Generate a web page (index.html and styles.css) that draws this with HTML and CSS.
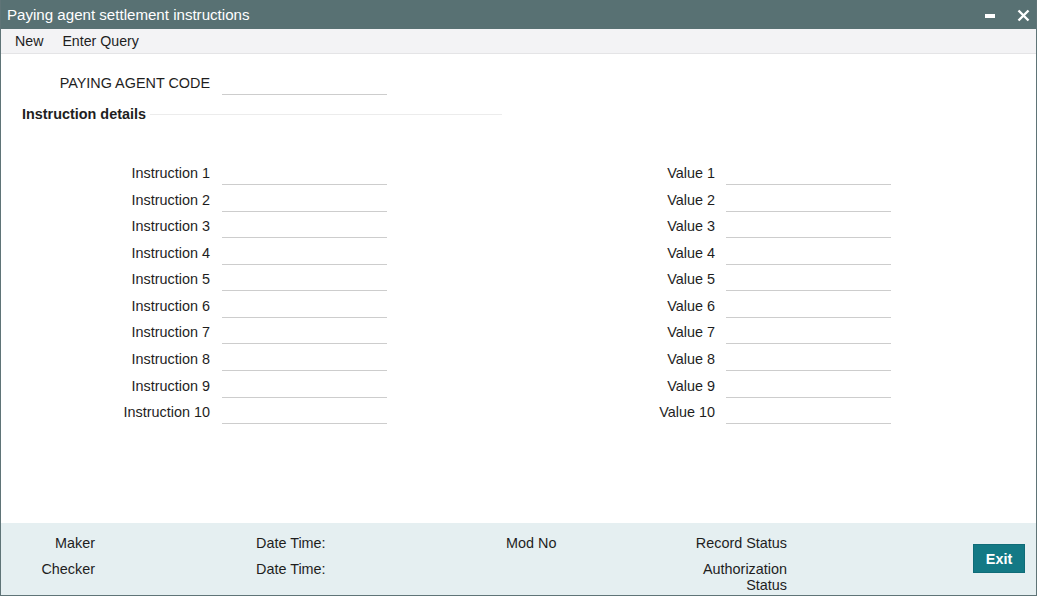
FILE: index.html
```
<!DOCTYPE html>
<html>
<head>
<meta charset="utf-8">
<link rel="stylesheet" href="styles.css">
</head>
<body>
<div class="window">
  <div class="titlebar">
    <span class="title">Paying agent settlement instructions</span>
    <span class="controls">
      <svg class="ico-min" width="11" height="12" viewBox="0 0 11 12"><rect x="0" y="5" width="10" height="4" fill="#fff"/></svg>
      <svg class="ico-close" width="13" height="13" viewBox="0 0 13 13"><path d="M1.5 1.5 L11.5 11.5 M11.5 1.5 L1.5 11.5" stroke="#fff" stroke-width="2.4" fill="none"/></svg>
    </span>
  </div>
  <div class="toolbar">
    <span class="tool">New</span>
    <span class="tool">Enter Query</span>
  </div>
  <div class="content">
    <div class="form-grid top-row">
      <label class="lbl">PAYING AGENT CODE</label>
      <div class="field"></div>
    </div>
    <div class="section-head">
      <span class="section-title">Instruction details</span>
      <span class="section-line"></span>
    </div>
    <div class="columns">
      <div class="form-grid left-col">
        <label class="lbl">Instruction 1</label><div class="field"></div>
        <label class="lbl">Instruction 2</label><div class="field"></div>
        <label class="lbl">Instruction 3</label><div class="field"></div>
        <label class="lbl">Instruction 4</label><div class="field"></div>
        <label class="lbl">Instruction 5</label><div class="field"></div>
        <label class="lbl">Instruction 6</label><div class="field"></div>
        <label class="lbl">Instruction 7</label><div class="field"></div>
        <label class="lbl">Instruction 8</label><div class="field"></div>
        <label class="lbl">Instruction 9</label><div class="field"></div>
        <label class="lbl">Instruction 10</label><div class="field"></div>
      </div>
      <div class="form-grid right-col">
        <label class="lbl">Value 1</label><div class="field"></div>
        <label class="lbl">Value 2</label><div class="field"></div>
        <label class="lbl">Value 3</label><div class="field"></div>
        <label class="lbl">Value 4</label><div class="field"></div>
        <label class="lbl">Value 5</label><div class="field"></div>
        <label class="lbl">Value 6</label><div class="field"></div>
        <label class="lbl">Value 7</label><div class="field"></div>
        <label class="lbl">Value 8</label><div class="field"></div>
        <label class="lbl">Value 9</label><div class="field"></div>
        <label class="lbl">Value 10</label><div class="field"></div>
      </div>
    </div>
  </div>
  <div class="footer">
    <span class="f-maker">Maker</span>
    <span class="f-date1">Date Time:</span>
    <span class="f-mod">Mod No</span>
    <span class="f-rec">Record Status</span>
    <span class="f-checker">Checker</span>
    <span class="f-date2">Date Time:</span>
    <span class="f-auth">Authorization<br>Status</span>
    <button class="exit-btn">Exit</button>
  </div>
</div>
</body>
</html>
```
FILE: styles.css
```
html, body {
  margin: 0;
  padding: 0;
  background: #ffffff;
}
body {
  font-family: "Liberation Sans", Arial, sans-serif;
  font-size: 14.4px;
  color: #1e1e1e;
}
.window {
  width: 1037px;
  height: 596px;
  box-sizing: border-box;
  border-left: 1px solid #5f7477;
  border-right: 1px solid #5f7477;
  border-bottom: 1px solid #5f7477;
  display: flex;
  flex-direction: column;
  overflow: hidden;
}
.titlebar {
  height: 29px;
  flex: none;
  background: #587173;
  color: #ffffff;
  display: flex;
  align-items: center;
  justify-content: space-between;
  padding: 0 0 0 7px;
  margin-left: -1px;
  margin-right: -1px;
}
.title {
  font-size: 15.1px;
}
.controls {
  display: flex;
  align-items: center;
  gap: 21px;
  padding-right: 7px;
}
.ico-min { display: block; margin-top: 1px; }
.ico-close { display: block; margin-top: 1px; }
.toolbar {
  height: 25px;
  flex: none;
  box-sizing: border-box;
  background: #f3f3f5;
  border-bottom: 1px solid #e4e4e6;
  display: flex;
  align-items: center;
  padding-left: 14px;
  gap: 19px;
  padding-bottom: 1px;
  font-size: 14.2px;
}
.content {
  flex: 1;
  padding-top: 18px;
}
.form-grid {
  display: grid;
  grid-auto-rows: 22px;
  row-gap: 4.58px;
  align-items: center;
}
.lbl {
  text-align: right;
  white-space: nowrap;
  line-height: 16px;
}
.field {
  height: 23px;
  box-sizing: border-box;
  border-bottom: 1px solid #cdcdcd;
  align-self: start;
}
.top-row {
  grid-template-columns: 209px 165px;
  column-gap: 12px;
}
.section-head {
  display: flex;
  align-items: center;
  width: 480px;
  margin-left: 21px;
  margin-top: 9px;
  height: 22px;
}
.section-title {
  font-weight: bold;
  white-space: nowrap;
  margin-right: 4px;
}
.section-line {
  flex: 1;
  height: 1px;
  background: #ececec;
}
.columns {
  display: flex;
  margin-top: 37px;
}
.left-col {
  grid-template-columns: 209px 165px;
  column-gap: 12px;
}
.right-col {
  grid-template-columns: 328px 165px;
  column-gap: 11px;
}
.footer {
  height: 72px;
  flex: none;
  background: #e5eff1;
  display: grid;
  grid-template-columns: 94px 161px 250px 281px 186px 52px;
  grid-template-rows: 16px 32px;
  row-gap: 10px;
  padding-top: 12px;
  box-sizing: border-box;
  line-height: 16px;
}
.f-maker { grid-column: 1; grid-row: 1; text-align: right; }
.f-checker { grid-column: 1; grid-row: 2; text-align: right; }
.f-date1 { grid-column: 3; grid-row: 1; }
.f-date2 { grid-column: 3; grid-row: 2; }
.f-mod { grid-column: 4; grid-row: 1; justify-self: start; }
.f-rec { grid-column: 4; grid-row: 1; text-align: right; }
.f-auth { grid-column: 4; grid-row: 2; text-align: right; }
.exit-btn {
  grid-column: 6;
  grid-row: 1 / span 2;
  align-self: start;
  margin-top: 9px;
  width: 52px;
  height: 29px;
  border: 1px solid #0f6c78;
  background: #137985;
  color: #ffffff;
  font-family: "Liberation Sans", Arial, sans-serif;
  font-weight: bold;
  font-size: 14.4px;
  padding: 0;
}
```
